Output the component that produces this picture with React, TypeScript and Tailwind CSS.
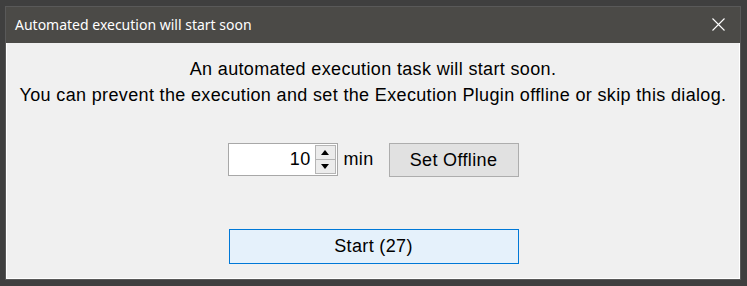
import React from "react";

export default function App() {
  return (
    <div className="w-[747px] h-[286px] bg-[#3f3f3f] pt-[6px] pl-[5px]">
      <div className="w-[736px] h-[274px] border border-[#595959] flex flex-col">
        <div className="h-[36px] bg-[#4b4a47] flex items-center justify-between pl-[9px] pr-[15px]">
          <span
            className="text-[14px] text-white leading-none pb-[1px]"
            style={{ fontFamily: '"Noto Sans", "Open Sans", sans-serif' }}
          >
            Automated execution will start soon
          </span>
          <svg width="13" height="13" viewBox="0 0 13 13" className="mb-[1px]">
            <path d="M0.5 0.5 L12.5 12.5 M12.5 0.5 L0.5 12.5" stroke="#ffffff" strokeWidth="1.1" fill="none" />
          </svg>
        </div>
        <div
          className="flex-1 bg-[#f0f0f0] border-x border-b border-white flex flex-col items-center text-black"
          style={{ fontFamily: '"Liberation Sans", Arial, sans-serif' }}
        >
          <div className="pt-[13px] text-[18px] leading-[26px] tracking-[0.35px] text-center">
            <div>An automated execution task will start soon.</div>
            <div>You can prevent the execution and set the Execution Plugin offline or skip this dialog.</div>
          </div>
          <div className="mt-[35px] w-[291px] flex items-start text-[18px] tracking-[0.35px]">
            <div className="w-[110px] h-[33px] bg-white border border-[#a8a8a8] flex items-center justify-end">
              <span className="pr-[4px]">10</span>
              <div className="w-[21px] h-[29px] flex flex-col mr-[1px]">
                <div className="flex-1 bg-[#ececec] border border-[#b5b5b5] flex items-center justify-center">
                  <svg width="8" height="5" viewBox="0 0 8 5">
                    <path d="M4 0 L8 5 L0 5 Z" fill="#000" />
                  </svg>
                </div>
                <div className="flex-1 bg-[#ececec] border border-t-0 border-[#b5b5b5] flex items-center justify-center">
                  <svg width="8" height="5" viewBox="0 0 8 5">
                    <path d="M0 0 L8 0 L4 5 Z" fill="#000" />
                  </svg>
                </div>
              </div>
            </div>
            <span className="ml-[6px] h-[33px] flex items-center">min</span>
            <div className="ml-auto w-[130px] h-[34px] bg-[#e1e1e1] border border-[#adadad] flex items-center justify-center">
              Set Offline
            </div>
          </div>
          <div className="mt-[52px] ml-[1px] w-[290px] h-[35px] bg-[#e5f1fb] border border-[#0078d7] flex items-center justify-center text-[18px] tracking-[0.35px]">
            Start (27)
          </div>
        </div>
      </div>
    </div>
  );
}
